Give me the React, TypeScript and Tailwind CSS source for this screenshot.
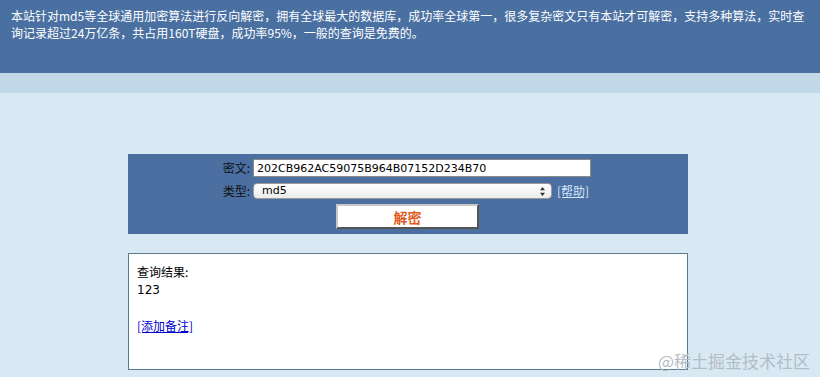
// cmd5-style decrypt page: blue intro header, form panel, result box.
const CJK = { fontFamily: '"Noto Sans CJK SC", "Noto Sans", sans-serif' };
const MONOISH = { fontFamily: '"DejaVu Sans", "Noto Sans CJK SC", sans-serif' };

export default function App() {
  return (
    <div className="relative h-[377px] w-[820px] overflow-hidden bg-[#d9e9f4]" style={CJK}>
      <header className="h-[73px] bg-[#4a70a2] px-[11px] pt-[7px] text-[12px] leading-[17px] text-white">
        <span className="block whitespace-nowrap">
          本站针对md5等全球通用加密算法进行反向解密，拥有全球最大的数据库，成功率全球第一，很多复杂密文只有本站才可解密，支持多种算法，实时查
        </span>
        <span className="block whitespace-nowrap">询记录超过24万亿条，共占用160T硬盘，成功率95%，一般的查询是免费的。</span>
      </header>
      <div className="h-[20px] bg-[#c0d8e8]" />

      <main className="ml-[128px] mt-[61px] w-[560px]">
        <form className="flex flex-col bg-[#4a6fa0] pb-[5px] pt-[5px] text-[12px] leading-[16px] text-[#111]">
          <div className="flex h-[18px] items-center">
            <label className="w-[125px] pr-[3px] text-right">密文:</label>
            <input
              readOnly
              value="202CB962AC59075B964B07152D234B70"
              className="h-[18px] w-[338px] border border-[#8a8a8a] bg-white px-[3px] text-[11px] text-black outline-none"
              style={MONOISH}
            />
          </div>
          <div className="mt-[6px] flex h-[16px] items-center">
            <label className="w-[125px] pr-[3px] text-right">类型:</label>
            <div
              className="flex h-[16px] w-[299px] items-center justify-between rounded-[4px] border border-[#9a9a9a] bg-gradient-to-b from-white to-[#ececec] pl-[8px] pr-[5px] text-[11px] text-black"
              style={MONOISH}
            >
              <span>md5</span>
              <svg width="7" height="11" viewBox="0 0 7 11">
                <path d="M3.5 1 L6 4.2 H1 Z M3.5 10 L6 6.8 H1 Z" fill="#333" />
              </svg>
            </div>
            <a href="#" className="ml-[5px] text-[#d6e6ff] underline">
              [帮助]
            </a>
          </div>
          <div className="mt-[5px] flex">
            <button
              type="button"
              className="ml-[208px] h-[25px] w-[143px] border-2 border-b-[#555] border-l-[#c8c8c8] border-r-[#555] border-t-[#c8c8c8] bg-white text-[14px] font-semibold leading-[20px] text-[#e25a1c]"
            >
              解密
            </button>
          </div>
        </form>

        <section className="mt-[19px] h-[117px] border border-[#5b7a8e] bg-white px-[8px] pt-[8px] text-[12px] leading-[19px] text-black">
          <p>查询结果:</p>
          <p className="text-[12px]" style={MONOISH}>
            123
          </p>
          <p className="mt-[16px]">
            <a href="#" className="text-[#0000cc] underline">
              [添加备注]
            </a>
          </p>
        </section>
      </main>

      <span className="absolute bottom-[4px] right-[10px] text-[17px] text-[#b4bcc6]">@稀土掘金技术社区</span>
    </div>
  );
}
